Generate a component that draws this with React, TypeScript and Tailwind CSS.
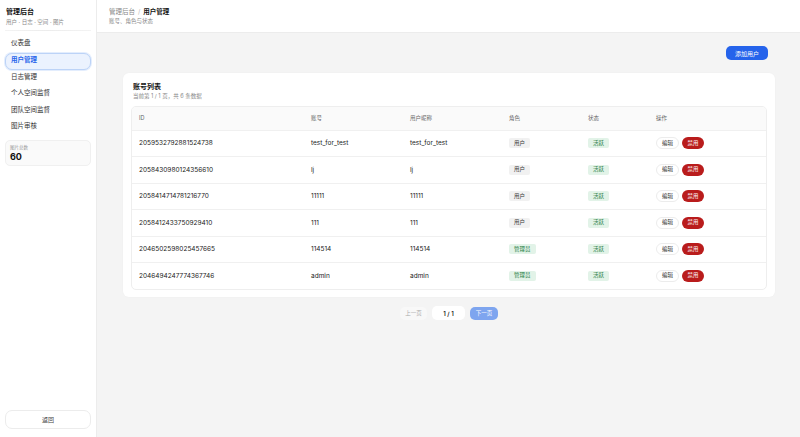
import React from 'react';

type User = {
  id: string;
  account: string;
  nickname: string;
  role: 'user' | 'admin';
};

const users: User[] = [
  { id: '2059532792881524738', account: 'test_for_test', nickname: 'test_for_test', role: 'user' },
  { id: '2058430980124356610', account: 'lj', nickname: 'lj', role: 'user' },
  { id: '2058414714781216770', account: '11111', nickname: '11111', role: 'user' },
  { id: '2058412433750929410', account: '111', nickname: '111', role: 'user' },
  { id: '2046502598025457665', account: '114514', nickname: '114514', role: 'admin' },
  { id: '2046494247774367746', account: 'admin', nickname: 'admin', role: 'admin' },
];

const navItems = ['仪表盘', '用户管理', '日志管理', '个人空间监督', '团队空间监督', '图片审核'];

function Sidebar() {
  return (
    <aside className="flex w-[97px] shrink-0 flex-col border-r border-[#ececec] bg-white px-[5px]">
      <div className="px-[1px] pt-[7px]">
        <div className="text-[7px] font-bold leading-[10px] text-[#111]">管理后台</div>
        <div className="mt-[1px] text-[5.5px] leading-[8px] text-[#888]">用户 · 日志 · 空间 · 图片</div>
      </div>
      <div className="mt-[4px] h-px bg-gradient-to-r from-[#f3f3f3] via-[#ececec] to-[#f3f3f3]" />
      <nav className="mt-[5px] flex flex-col">
        {navItems.map((item) => {
          const active = item === '用户管理';
          return (
            <div
              key={item}
              className={
                active
                  ? 'flex h-[17px] items-center rounded-[7px] border border-[#bcd3f7] bg-[#ebf2fe] px-[5px] text-[6.5px] font-semibold text-[#2563eb] shadow-[0_0_0_1px_#e3edfd]'
                  : 'flex h-[16.5px] items-center border border-transparent px-[5px] text-[6.5px] text-[#333]'
              }
            >
              {item}
            </div>
          );
        })}
      </nav>
      <div className="mt-[4px] rounded-[5px] border border-[#f0f0f0] bg-[#fafafa] px-[4px] py-[3px]">
        <div className="text-[4.5px] leading-[7px] text-[#999]">图片总数</div>
        <div className="text-[9px] font-bold leading-[11px] text-[#111]">60</div>
      </div>
      <div className="flex-1" />
      <button className="mb-[8px] h-[19px] w-full rounded-[7px] border border-[#ececec] bg-white text-[6px] text-[#444]">
        返回
      </button>
    </aside>
  );
}

function Badge({ children, tone }: { children: React.ReactNode; tone: 'green' | 'gray' }) {
  const toneCls = tone === 'green' ? 'bg-[#e2f3e8] text-[#1f7a3f]' : 'bg-[#f1f1f1] text-[#333]';
  return (
    <span className={`flex h-[10px] w-fit items-center rounded-[2px] px-[5px] text-[5.5px] leading-none ${toneCls}`}>
      {children}
    </span>
  );
}

function Table() {
  const headCls = 'px-[7px] text-left align-middle text-[5.5px] font-normal leading-none text-[#666]';
  const cellCls = 'px-[7px] align-middle text-[6.5px] leading-none text-[#222]';
  return (
    <div className="overflow-hidden rounded-[5px] border border-[#eeeeee]">
      <table className="w-full table-fixed border-collapse">
        <colgroup>
          <col className="w-[172px]" />
          <col className="w-[99px]" />
          <col className="w-[99px]" />
          <col className="w-[79px]" />
          <col className="w-[68px]" />
          <col />
        </colgroup>
        <thead>
          <tr className="h-[23px] bg-[#fafafa]">
            <th className={headCls}>ID</th>
            <th className={headCls}>账号</th>
            <th className={headCls}>用户昵称</th>
            <th className={headCls}>角色</th>
            <th className={headCls}>状态</th>
            <th className={headCls}>操作</th>
          </tr>
        </thead>
        <tbody>
          {users.map((u) => (
            <tr key={u.id} className="h-[26.5px] border-t border-[#f0f0f0]">
              <td className={cellCls}>{u.id}</td>
              <td className={cellCls}>{u.account}</td>
              <td className={cellCls}>{u.nickname}</td>
              <td className={cellCls}>
                {u.role === 'admin' ? <Badge tone="green">管理员</Badge> : <Badge tone="gray">用户</Badge>}
              </td>
              <td className={cellCls}>
                <Badge tone="green">活跃</Badge>
              </td>
              <td className={cellCls}>
                <div className="flex items-center gap-[3px]">
                  <button className="h-[12px] w-[23px] rounded-full border border-[#ececec] bg-white text-[5.5px] leading-none text-[#333]">
                    编辑
                  </button>
                  <button className="h-[12px] w-[22px] rounded-full bg-[#b91c1c] text-[5.5px] leading-none text-white">
                    禁用
                  </button>
                </div>
              </td>
            </tr>
          ))}
        </tbody>
      </table>
    </div>
  );
}

export default function App() {
  return (
    <div
      className="flex h-[437px] w-full overflow-hidden bg-[#f4f4f4]"
      style={{ fontFamily: 'Inter, "Noto Sans CJK SC", sans-serif' }}
    >
      <Sidebar />
      <main className="flex min-w-0 flex-1 flex-col">
        <header className="h-[33px] shrink-0 border-b border-[#ececec] bg-white px-[12px] pt-[7px]">
          <div className="flex items-center gap-[3px] text-[6.5px] leading-[10px]">
            <span className="text-[#888]">管理后台</span>
            <span className="text-[#bbb]">/</span>
            <span className="font-bold text-[#111]">用户管理</span>
          </div>
          <div className="text-[5.5px] leading-[8px] text-[#888]">账号、角色与状态</div>
        </header>
        <div className="pl-[26px] pr-[25px]">
          <div className="flex justify-end pr-[7px] pt-[13px]">
            <button className="h-[14px] w-[42px] rounded-[5px] bg-[#2563eb] text-[6px] text-white">
              添加用户
            </button>
          </div>
          <section className="mt-[13px] rounded-[6px] bg-white px-[8px] pb-[7px] pt-[9px] shadow-[0_0_2px_rgba(0,0,0,0.03)]">
            <div className="px-[2px]">
              <h2 className="text-[7px] font-bold leading-[10px] text-[#111]">账号列表</h2>
              <p className="text-[5.5px] leading-[8px] text-[#888]">当前第 1 / 1 页，共 6 条数据</p>
            </div>
            <div className="mt-[6px]">
              <Table />
            </div>
          </section>
          <div className="mt-[9px] flex items-center justify-center gap-[5px]">
            <button className="h-[13px] w-[27px] rounded-[5px] bg-[#f8f8f8] text-[5.5px] text-[#aaa]">上一页</button>
            <span className="flex h-[14px] w-[33px] items-center justify-center rounded-[5px] bg-white text-[6px] font-semibold text-[#222]">
              1 / 1
            </span>
            <button className="h-[13px] w-[28px] rounded-[5px] bg-[#7ea5ef] text-[5.5px] text-white">下一页</button>
          </div>
        </div>
      </main>
    </div>
  );
}
